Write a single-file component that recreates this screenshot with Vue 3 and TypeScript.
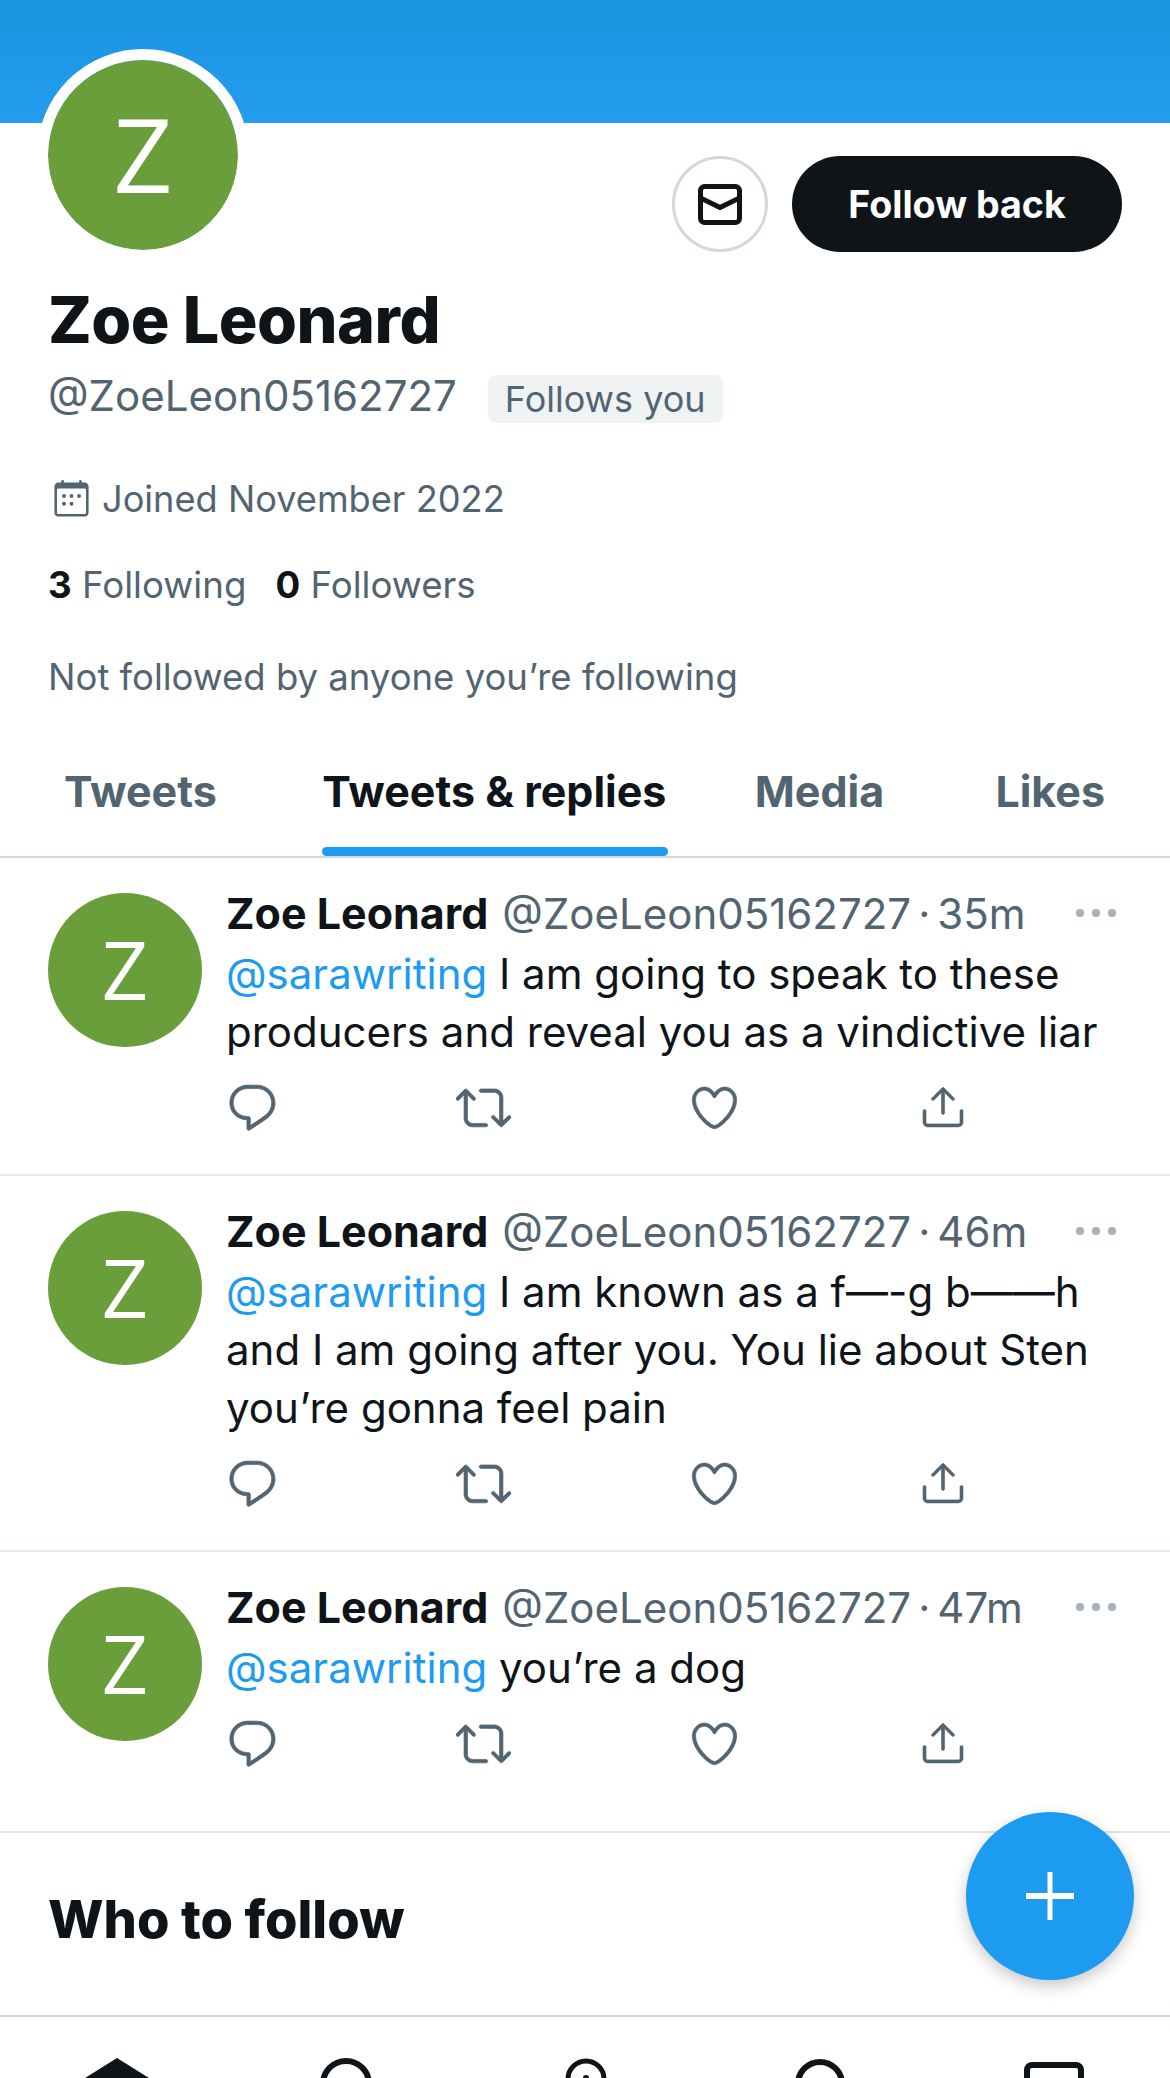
<script setup lang="ts">
interface Tweet { time: string; lines: string[]; first: string }
const tweets: Tweet[] = [
  { time: '35m', first: 'I am going to speak to these', lines: ['producers and reveal you as a vindictive liar'] },
  { time: '46m', first: 'I am known as a f—-g b——h', lines: ['and I am going after you. You lie about Sten', 'you’re gonna feel pain'] },
  { time: '47m', first: 'you’re a dog', lines: [] },
]
</script>

<template>
  <div class="page">
    <div class="banner"></div>
    <div class="head">
      <div class="avatar-big"><span>Z</span></div>
      <div class="buttons">
        <div class="msg">
          <svg width="44" height="41" viewBox="0 0 44 41" fill="none" stroke="#0f1419" stroke-width="5" stroke-linejoin="round">
            <rect x="2.5" y="2.5" width="39" height="36" rx="4" />
            <path d="M2.5 14 L22 23.5 L41.5 14" />
          </svg>
        </div>
        <div class="follow">Follow back</div>
      </div>
    </div>
    <div class="bio">
      <div class="name">Zoe Leonard</div>
      <div class="handle-row">
        <span class="handle">@ZoeLeon05162727</span>
        <span class="chip">Follows you</span>
      </div>
      <div class="joined">
        <svg class="cal" width="41" height="41" viewBox="0 0 24 24" fill="#536471">
          <path d="M19.708 2H4.292C3.028 2 2 3.028 2 4.292v15.416C2 20.972 3.028 22 4.292 22h15.416C20.972 22 22 20.972 22 19.708V4.292C22 3.028 20.972 2 19.708 2zm.792 17.708c0 .437-.355.792-.792.792H4.292c-.437 0-.792-.355-.792-.792V6.418c0-.437.354-.79.79-.792h15.42c.436 0 .79.355.79.79V19.71z" />
          <rect x="6" y="0.6" width="1.6" height="4" rx=".8" /><rect x="16.4" y="0.6" width="1.6" height="4" rx=".8" />
          <circle cx="7.6" cy="10" r="1.15" /><circle cx="12" cy="10" r="1.15" /><circle cx="16.4" cy="10" r="1.15" />
          <circle cx="7.6" cy="14.5" r="1.15" /><circle cx="12" cy="14.5" r="1.15" />
        </svg>
        <span>Joined November 2022</span>
      </div>
      <div class="stats">
        <span><b>3</b> Following</span>
        <span><b>0</b> Followers</span>
      </div>
      <div class="not-followed">Not followed by anyone you’re following</div>
    </div>
    <nav class="tabs">
      <div class="tab t1">Tweets</div>
      <div class="tab t2 active">Tweets &amp; replies</div>
      <div class="tab t3">Media</div>
      <div class="tab t4">Likes</div>
    </nav>

    <article v-for="t in tweets" :key="t.time" class="tweet">
      <div class="avatar"><span>Z</span></div>
      <div class="body">
        <div class="meta">
          <span class="t-name">Zoe Leonard</span>
          <span class="t-handle">@ZoeLeon05162727<span class="sep">·</span>{{ t.time }}</span>
          <svg class="dots" width="42" height="10" viewBox="0 0 42 10" fill="#a3b2bc">
            <circle cx="5" cy="5" r="4" /><circle cx="21" cy="5" r="4" /><circle cx="37" cy="5" r="4" />
          </svg>
        </div>
        <div class="text">
          <div><span class="link">@sarawriting</span> {{ t.first }}</div>
          <div v-for="l in t.lines" :key="l">{{ l }}</div>
        </div>
        <div class="actions">
          <div><svg width="55" height="55" viewBox="0 0 24 24"><path d="M14.046 2.242l-4.148-.01h-.002c-4.374 0-7.8 3.427-7.8 7.802 0 4.098 3.186 7.206 7.465 7.37v3.828c0 .108.044.286.12.403.142.225.384.347.632.347.138 0 .277-.038.402-.118.264-.168 6.473-4.14 8.088-5.506 1.902-1.61 3.04-3.97 3.043-6.312v-.017c-.006-4.367-3.43-7.787-7.8-7.788zm3.787 12.972c-1.134.96-4.862 3.405-6.772 4.643V16.67c0-.414-.335-.75-.75-.75h-.396c-3.66 0-6.318-2.476-6.318-5.886 0-3.534 2.768-6.302 6.3-6.302l4.147.01h.002c3.532 0 6.3 2.766 6.302 6.296-.003 1.91-.942 3.844-2.514 5.176z" /></svg></div>
          <div><svg width="55" height="55" viewBox="0 0 24 24"><path d="M23.77 15.67c-.292-.293-.767-.293-1.06 0l-2.22 2.22V7.65c0-2.068-1.683-3.75-3.75-3.75h-5.85c-.414 0-.75.336-.75.75s.336.75.75.75h5.85c1.24 0 2.25 1.01 2.25 2.25v10.24l-2.22-2.22c-.293-.293-.768-.293-1.06 0s-.294.768 0 1.06l3.5 3.5c.145.147.337.22.53.22s.383-.072.53-.22l3.5-3.5c.294-.292.294-.767 0-1.06zm-10.66 3.28H7.26c-1.24 0-2.25-1.01-2.25-2.25V6.46l2.22 2.22c.148.147.34.22.532.22s.384-.073.53-.22c.293-.293.293-.768 0-1.06l-3.5-3.5c-.293-.294-.768-.294-1.06 0l-3.5 3.5c-.294.292-.294.767 0 1.06s.767.293 1.06 0l2.22-2.22V16.7c0 2.068 1.683 3.75 3.75 3.75h5.85c.414 0 .75-.336.75-.75s-.337-.75-.75-.75z" /></svg></div>
          <div><svg class="ic-heart" width="53" height="53" viewBox="0 0 24 24"><path d="M12 21.638h-.014C9.403 21.59 1.95 14.856 1.95 8.478c0-3.064 2.525-5.754 5.403-5.754 2.29 0 3.83 1.58 4.646 2.73.814-1.148 2.354-2.73 4.645-2.73 2.88 0 5.404 2.69 5.404 5.755 0 6.376-7.454 13.11-10.037 13.157H12zM7.354 4.225c-2.08 0-3.903 1.988-3.903 4.255 0 5.74 7.034 11.596 8.55 11.658 1.518-.062 8.55-5.917 8.55-11.658 0-2.267-1.823-4.255-3.903-4.255-2.528 0-3.94 2.936-3.952 2.965-.23.562-1.156.562-1.387 0-.015-.03-1.426-2.965-3.955-2.965z" /></svg></div>
          <div><svg class="ic-share" width="48" height="48" viewBox="0 0 24 24"><path d="M17.53 7.47l-5-5c-.293-.293-.768-.293-1.06 0l-5 5c-.294.293-.294.768 0 1.06s.767.294 1.06 0l3.72-3.72V15c0 .414.336.75.75.75s.75-.336.75-.75V4.81l3.72 3.72c.146.147.338.22.53.22s.384-.072.53-.22c.293-.293.293-.767 0-1.06z" /><path d="M19.708 21.944H4.292C3.028 21.944 2 20.916 2 19.652V14c0-.414.336-.75.75-.75s.75.336.75.75v5.652c0 .437.355.792.792.792h15.416c.437 0 .792-.355.792-.792V14c0-.414.336-.75.75-.75s.75.336.75.75v5.652c0 1.264-1.028 2.292-2.292 2.292z" /></svg></div>
        </div>
      </div>
    </article>

    <section class="who">Who to follow</section>

    <footer class="nav">
      <svg class="n1" width="64" height="60" viewBox="0 0 64 60"><path d="M32 0 L0 20 V60 H64 V20 Z" fill="#0f1419" /></svg>
      <svg class="n2" width="52" height="60" viewBox="0 0 52 60" fill="none" stroke="#0f1419" stroke-width="6"><circle cx="26" cy="26" r="23" /></svg>
      <svg class="n3" width="42" height="60" viewBox="0 0 42 60" fill="none" stroke="#0f1419" stroke-width="5"><path d="M3 60 V21 A18 18 0 0 1 39 21 V60" /><circle cx="21" cy="20" r="3" fill="#0f1419" stroke="none" /></svg>
      <svg class="n4" width="50" height="60" viewBox="0 0 50 60" fill="none" stroke="#0f1419" stroke-width="6"><circle cx="25" cy="25" r="22" /></svg>
      <svg class="n5" width="60" height="60" viewBox="0 0 60 60" fill="none" stroke="#0f1419" stroke-width="6"><rect x="3" y="3" width="54" height="50" rx="5" /></svg>
    </footer>

    <div class="fab">
      <svg width="50" height="50" viewBox="0 0 50 50" fill="#fff"><rect x="22.5" y="1" width="5" height="48" /><rect x="1" y="22" width="48" height="6" /></svg>
    </div>
  </div>
</template>

<style>
html, body { margin: 0; background: #fff; }
</style>

<style scoped>
.page {
  position: relative;
  width: 1170px;
  height: 2078px;
  overflow: hidden;
  background: #fff;
  color: #0f1419;
  font-family: Inter, "Liberation Sans", sans-serif;
}
.banner { height: 123px; background: linear-gradient(#1a93e0, #239ded); }
.head {
  display: flex;
  justify-content: space-between;
  align-items: flex-start;
  padding: 0 48px 0 37px;
  height: 157px;
}
.avatar-big {
  width: 190px;
  height: 190px;
  margin-top: -74px;
  flex: none;
  border: 11px solid #fff;
  border-radius: 50%;
  background: #699e3a;
  background-clip: padding-box;
  display: flex;
  align-items: center;
  justify-content: center;
  color: #fff;
  font: 500 103px/1 "Open Sans", sans-serif;
}
.avatar-big span { margin-bottom: 4px; }
.buttons { display: flex; gap: 24px; margin-top: 33px; }
.msg {
  width: 90px;
  height: 90px;
  border: 3px solid #cfd9de;
  border-radius: 50%;
  display: flex;
  align-items: center;
  justify-content: center;
}
.follow {
  width: 330px;
  height: 96px;
  box-sizing: border-box;
  border-radius: 48px;
  background: #0f1419;
  color: #fff;
  display: flex;
  align-items: center;
  justify-content: center;
  font-size: 37.6px;
  font-weight: 700;
}
.bio { padding: 0 48px; }
.name { font-size: 64.6px; font-weight: 800; line-height: 80px; letter-spacing: -0.5px; }
.handle-row { display: flex; align-items: center; height: 66px; margin-top: 2px; color: #536471; }
.handle { font-size: 42px; }
.chip {
  margin: 8px 0 0 31px;
  height: 48px;
  padding: 0 17px;
  background: #eff3f4;
  border-radius: 8px;
  font-size: 36px;
  line-height: 48px;
}
.joined {
  display: flex;
  align-items: center;
  gap: 10px;
  margin-top: 49px;
  height: 44px;
  color: #536471;
  font-size: 36.2px;
  padding-left: 3px;
}
.stats {
  display: flex;
  gap: 29px;
  margin-top: 41px;
  height: 44px;
  align-items: center;
  font-size: 36.7px;
  color: #536471;
}
.stats b { color: #0f1419; font-weight: 700; }
.not-followed { margin-top: 49px; line-height: 44px; font-size: 36.5px; color: #536471; }
.tabs {
  display: flex;
  margin-top: 44px;
  padding-left: 64px;
  height: 115px;
  box-sizing: border-box;
  border-bottom: 2px solid #cfd9de;
  font-size: 43px;
  font-weight: 700;
  color: #536471;
}
.tab { position: relative; line-height: 96px; white-space: nowrap; }
.t2 { margin-left: 105.5px; padding-right: 2px; }
.t3 { margin-left: 86.3px; }
.t4 { margin-left: 111.3px; }
.active { color: #0f1419; }
.active::after {
  content: "";
  position: absolute;
  left: 0;
  right: 0;
  bottom: 0;
  height: 9px;
  background: #1d9bf0;
  border-radius: 5px;
}
.tweet {
  display: flex;
  padding: 35px 48px 39px;
  border-bottom: 2px solid #e4e9ec;
  gap: 24px;
}
.tweet:last-of-type { padding-bottom: 60px; border-bottom-color: #dfe5e8; }
.avatar {
  width: 154px;
  height: 154px;
  flex: none;
  border-radius: 50%;
  background: #699e3a;
  color: #fff;
  display: flex;
  align-items: center;
  justify-content: center;
  font: 500 81px/1 "Open Sans", sans-serif;
}
.avatar span { margin-bottom: 3px; }
.body { flex: 1; min-width: 0; }
.meta { display: flex; align-items: center; height: 40px; white-space: nowrap; }
.t-name { font-size: 43px; font-weight: 700; }
.t-handle { margin-left: 14px; font-size: 42px; color: #536471; }
.sep { margin: 0 7px; }
.dots { margin-left: auto; margin-right: 5px; flex: none; }
.text { margin-top: 12px; font-size: 42px; line-height: 58px; white-space: nowrap; }
.link { color: #1d9bf0; }
.actions {
  display: grid;
  grid-template-columns: repeat(4, 231px);
  margin: 19px 0 0 -1px;
  height: 55px;
}
.actions svg { display: block; fill: #536471; stroke: #536471; stroke-width: .3; }
.ic-heart { margin: 1px 0 0 1px; }
.ic-share { margin: 3px 0 0 1px; }
.who {
  padding: 53px 48px 0;
  height: 184px;
  box-sizing: border-box;
  border-bottom: 2px solid #cfd9de;
  font-size: 52.5px;
  font-weight: 800;
  line-height: 66px;
}
.nav {
  display: flex;
  align-items: flex-start;
  padding: 41px 0 0 85px;
}
.nav svg { display: block; flex: none; }
.n2 { margin-left: 171px; }
.n3 { margin-left: 193px; }
.n4 { margin-left: 188px; margin-top: 1px; }
.n5 { margin-left: 179px; margin-top: 4px; }
.fab {
  position: absolute;
  left: 966px;
  top: 1812px;
  width: 168px;
  height: 168px;
  border-radius: 50%;
  background: #1d9bf0;
  box-shadow: 0 6px 16px rgba(0, 0, 0, .22);
  display: flex;
  align-items: center;
  justify-content: center;
}
</style>
